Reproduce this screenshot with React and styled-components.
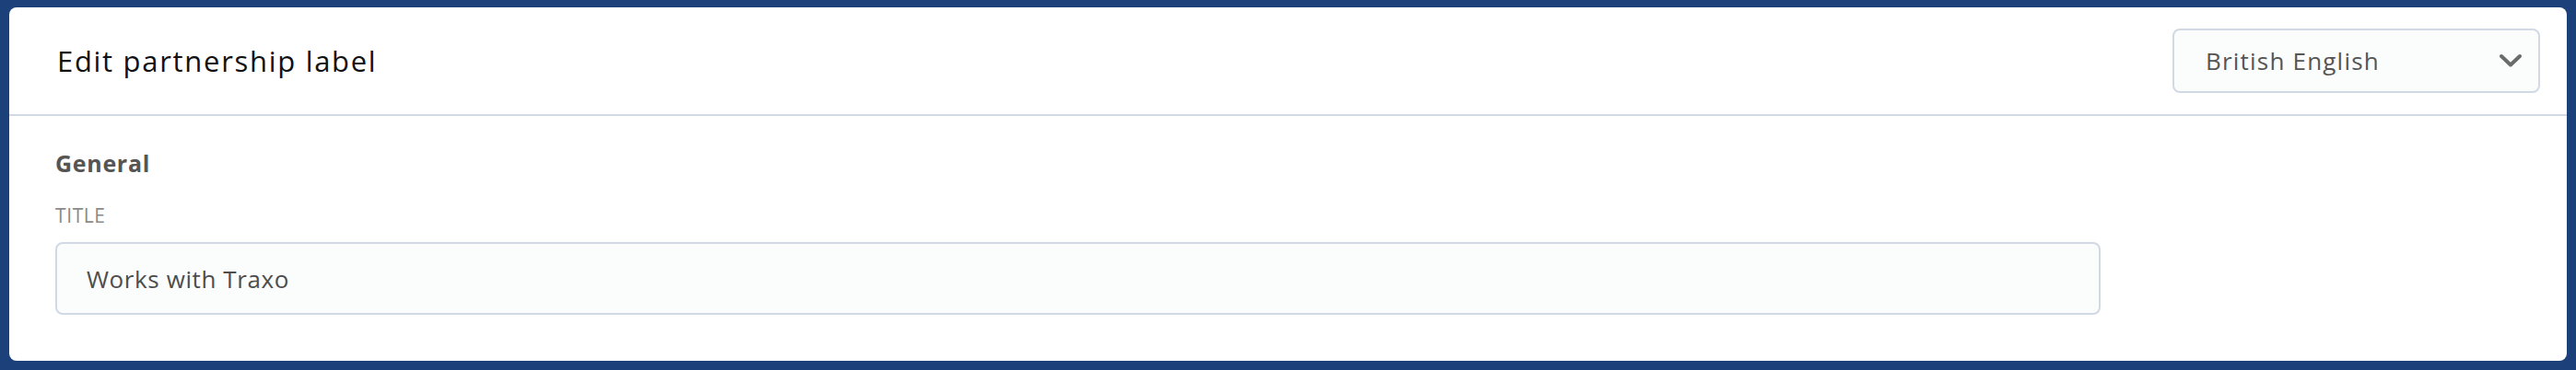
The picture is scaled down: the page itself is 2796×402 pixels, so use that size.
import React from "react";
import styled, { createGlobalStyle } from "styled-components";

const GlobalStyle = createGlobalStyle`
  html, body {
    margin: 0;
    padding: 0;
    background: #1c4079;
  }
  body {
    font-family: "Open Sans", "Liberation Sans", sans-serif;
  }
`;

const Page = styled.div`
  padding: 8px 10px 10px 10px;
  box-sizing: border-box;
  width: 2796px;
  height: 402px;
`;

const Card = styled.div`
  background: #ffffff;
  border-radius: 8px;
  height: 384px;
  box-sizing: border-box;
  overflow: hidden;
`;

const Header = styled.div`
  display: flex;
  align-items: center;
  justify-content: space-between;
  height: 118px;
  box-sizing: border-box;
  padding: 0 29px 0 52px;
  border-bottom: 2px solid #d0d9e4;
`;

const Title = styled.h1`
  margin: 0;
  font-size: 31px;
  font-weight: 400;
  color: #111111;
  letter-spacing: 1.7px;
`;

const Select = styled.div`
  display: flex;
  align-items: center;
  justify-content: space-between;
  width: 399px;
  height: 70px;
  box-sizing: border-box;
  padding: 0 17px 0 34px;
  border: 2px solid #d0d9e4;
  border-radius: 8px;
  background: #fbfcfc;
  font-size: 26px;
  letter-spacing: 1.2px;
  color: #555555;
`;

const Body = styled.div`
  padding: 34px 50px 0 50px;
`;

const SectionTitle = styled.h2`
  margin: 0;
  font-size: 25px;
  font-weight: 700;
  color: #555555;
  line-height: 34px;
  letter-spacing: 0.7px;
`;

const FieldLabel = styled.label`
  display: block;
  margin-top: 28px;
  font-size: 21px;
  color: #8a8a8a;
  line-height: 24px;
  letter-spacing: 0.6px;
`;

const Input = styled.div`
  display: flex;
  align-items: center;
  margin-top: 17px;
  max-width: 2220px;
  height: 79px;
  box-sizing: border-box;
  padding: 0 32px;
  border: 2px solid #d0d9e4;
  border-radius: 8px;
  background: #fbfcfc;
  font-size: 26px;
  letter-spacing: 0.6px;
  color: #4d4d4d;
`;

const Chevron = () => (
  <svg width="26" height="16" viewBox="0 0 26 16" fill="none">
    <path
      d="M3 3 L13 12.5 L23 3"
      stroke="#6b6b6b"
      strokeWidth="4"
      strokeLinecap="round"
      strokeLinejoin="round"
    />
  </svg>
);

export default function App() {
  return (
    <Page>
      <GlobalStyle />
      <Card>
        <Header>
          <Title>Edit partnership label</Title>
          <Select>
            <span>British English</span>
            <Chevron />
          </Select>
        </Header>
        <Body>
          <SectionTitle>General</SectionTitle>
          <FieldLabel>TITLE</FieldLabel>
          <Input>Works with Traxo</Input>
        </Body>
      </Card>
    </Page>
  );
}
